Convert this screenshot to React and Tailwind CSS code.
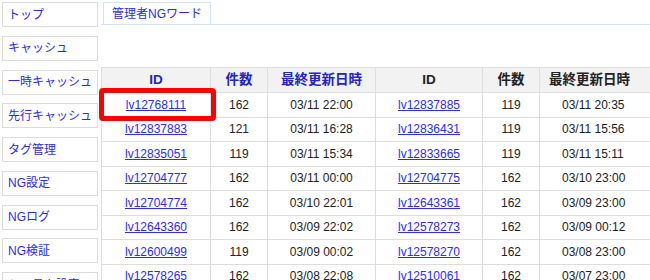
import React from "react";

const menu = ["トップ", "キャッシュ", "一時キャッシュ", "先行キャッシュ", "タグ管理", "NG設定", "NGログ", "NG検証", "システム設定"];

const rows = [
  ["lv12768111", "162", "03/11 22:00", "lv12837885", "119", "03/11 20:35"],
  ["lv12837883", "121", "03/11 16:28", "lv12836431", "119", "03/11 15:56"],
  ["lv12835051", "119", "03/11 15:34", "lv12833665", "119", "03/11 15:11"],
  ["lv12704777", "162", "03/11 00:00", "lv12704775", "162", "03/10 23:00"],
  ["lv12704774", "162", "03/10 22:01", "lv12643361", "162", "03/09 23:00"],
  ["lv12643360", "162", "03/09 22:02", "lv12578273", "162", "03/09 00:12"],
  ["lv12600499", "119", "03/09 00:02", "lv12578270", "162", "03/08 23:00"],
  ["lv12578265", "162", "03/08 22:08", "lv12510061", "162", "03/07 23:00"],
];

export default function App() {
  return (
    <div
      className="relative w-[650px] h-[280px] overflow-hidden bg-white flex text-[12px]"
      style={{ fontFamily: '"Liberation Sans", "Noto Sans CJK JP", sans-serif' }}
    >
      <div className="w-[101px] shrink-0 flex flex-col gap-[8.75px] pl-[2px] pt-[2px]">
        {menu.map((m) => (
          <div
            key={m}
            className="w-[96px] h-[25px] shrink-0 border border-[#dcdcdc] bg-white text-[#2b2bf0] flex items-center pl-[5px] whitespace-nowrap overflow-hidden"
          >
            {m}
          </div>
        ))}
      </div>
      <div className="flex-1 flex flex-col">
        <div className="mt-[2px] border-b border-[#cfe3f2] flex">
          <div className="ml-[2px] w-[108px] h-[22px] border-l border-t border-r border-[#cfe3f2] text-[#2b2bf0] flex items-center justify-center">
            管理者NGワード
          </div>
        </div>
        <table className="mt-[42px] border-collapse table-fixed w-[560px] text-[#222]">
          <colgroup>
            <col className="w-[109px]" />
            <col className="w-[57px]" />
            <col className="w-[108px]" />
            <col className="w-[107px]" />
            <col className="w-[57px]" />
            <col className="w-[122px]" />
          </colgroup>
          <thead>
            <tr className="h-[25px] bg-[#f2f2f2] text-[13.5px] font-bold">
              <th className="border border-[#dddddd] text-[#2323c8] font-bold">ID</th>
              <th className="border border-[#dddddd] text-[#2323c8] font-bold">件数</th>
              <th className="border border-[#dddddd] text-[#2323c8] font-bold whitespace-nowrap">最終更新日時</th>
              <th className="border border-[#dddddd] text-[#222] font-bold">ID</th>
              <th className="border border-[#dddddd] text-[#222] font-bold">件数</th>
              <th className="border border-[#dddddd] text-[#222] font-bold whitespace-nowrap text-left pl-[9px]">最終更新日時</th>
            </tr>
          </thead>
          <tbody>
            {rows.map((r) => (
              <tr key={r[0]} className="h-[24.5px]">
                <td className="border border-[#dddddd] text-center">
                  <a className="text-[#2b2bff] underline" href="#">{r[0]}</a>
                </td>
                <td className="border border-[#dddddd] text-center">{r[1]}</td>
                <td className="border border-[#dddddd] text-center">{r[2]}</td>
                <td className="border border-[#dddddd] text-center">
                  <a className="text-[#2b2bff] underline" href="#">{r[3]}</a>
                </td>
                <td className="border border-[#dddddd] text-center">{r[4]}</td>
                <td className="border border-[#dddddd] text-left pl-[22px]">{r[5]}</td>
              </tr>
            ))}
          </tbody>
        </table>
      </div>
      <div className="absolute left-[99px] top-[88px] w-[117px] h-[33px] border-[5px] border-[#ff0000] rounded-[4px]" />
    </div>
  );
}
